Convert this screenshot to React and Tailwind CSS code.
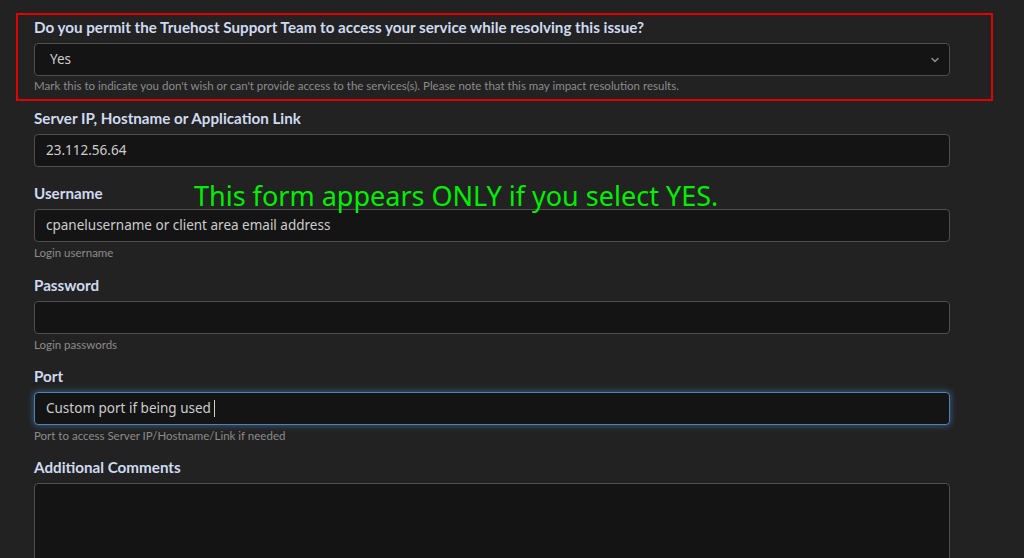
import React from 'react';

const labelCls = "block text-[15.2px] leading-5 font-bold text-[#d0daf0] [font-family:Lato,'Liberation_Sans',sans-serif]";
const helpCls = "block text-[11.5px] leading-4 text-[#8c8c8c] [font-family:Lato,'Liberation_Sans',sans-serif]";
const boxCls = "w-[916px] h-[33px] rounded-[4px] border border-[#4e4e4e] bg-[#141414] flex items-center pl-[11px] text-[13.5px] text-[#cdcdcd] [font-family:'Noto_Sans','Open_Sans',sans-serif]";

function Field({ label, value, help, focused, className = "" }) {
  return (
    <div className={className}>
      <span className={labelCls}>{label}</span>
      <div
        className={
          focused
            ? "mt-[6px] w-[916px] h-[33px] rounded-[4px] border border-[#4f82b4] shadow-[0_0_6px_1px_rgba(70,130,190,0.55)] bg-[#141414] flex items-center pl-[11px] text-[13.5px] text-[#cdcdcd] [font-family:'Noto_Sans','Open_Sans',sans-serif]"
            : "mt-[6px] " + boxCls
        }
      >
        {value}
        {focused && <span className="ml-[3px] inline-block w-px h-[17px] bg-[#d0d0d0]" />}
      </div>
      {help && <span className={helpCls + " mt-[3px]"}>{help}</span>}
    </div>
  );
}

export default function App() {
  return (
    <div className="relative w-[1024px] h-[558px] overflow-hidden bg-[#222222]">
      {/* permission question, outlined in red */}
      <div className="ml-[16px] mt-[13px] w-[977px] border-2 border-[#e00000] pl-4 pt-[2px] pb-[5px]">
        <span className={labelCls}>Do you permit the Truehost Support Team to access your service while resolving this issue?</span>
        <div className="mt-[6px] w-[916px] h-[33px] rounded-[4px] border border-[#4e4e4e] bg-[#141414] flex items-center justify-between pl-[15px] pr-[9px] text-[13.5px] text-[#cdcdcd] [font-family:'Noto_Sans','Open_Sans',sans-serif]">
          <span>Yes</span>
          <svg width="10" height="10" viewBox="0 0 10 10" fill="none">
            <path d="M2 3.5 L5 6.5 L8 3.5" stroke="#8a8a8a" strokeWidth="1.6" strokeLinecap="round" strokeLinejoin="round" />
          </svg>
        </div>
        <span className={helpCls + " mt-[2px]"}>
          Mark this to indicate you don't wish or can't provide access to the services(s). Please note that this may impact resolution results.
        </span>
      </div>

      <div className="pl-[34px]">
        <Field className="mt-[7px]" label="Server IP, Hostname or Application Link" value="23.112.56.64" />
        <Field className="mt-[16px]" label="Username" value="cpanelusername or client area email address" help="Login username" />
        <Field className="mt-[14px]" label="Password" value="" help="Login passwords" />
        <Field className="mt-[13px]" label="Port" value="Custom port if being used" help="Port to access Server IP/Hostname/Link if needed" focused />
        <div className="mt-[13px]">
          <span className={labelCls}>Additional Comments</span>
          <div className="mt-[6px] w-[916px] h-[140px] rounded-[4px] border border-[#4e4e4e] bg-[#141414]" />
        </div>
      </div>

      {/* annotation */}
      <div className="absolute left-[194px] top-[180px] text-[27px] leading-8 text-[#00ee00] [font-family:'Noto_Sans','Open_Sans',sans-serif]">
        This form appears ONLY if you select YES.
      </div>
    </div>
  );
}
